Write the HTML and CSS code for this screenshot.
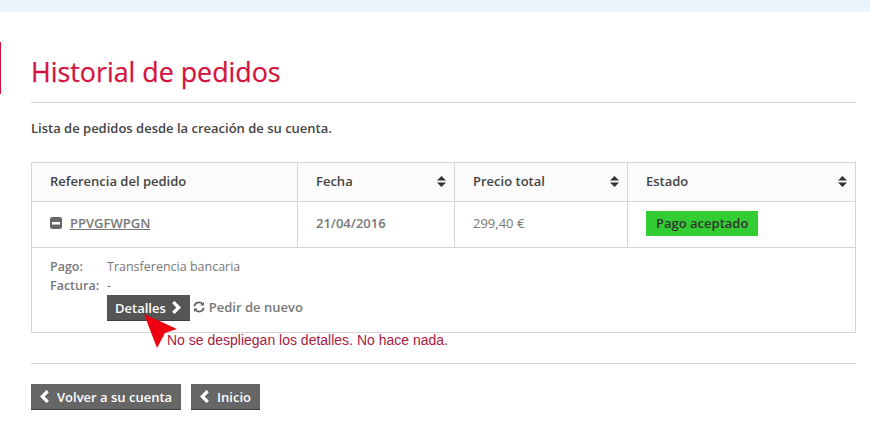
FILE: index.html
```html
<!DOCTYPE html>
<html lang="es">
<head>
<meta charset="utf-8">
<title>Historial de pedidos</title>
<link rel="stylesheet" href="styles.css">
</head>
<body>
<div class="topband"></div>
<main class="page">
  <div class="accent"></div>
  <h1 class="title">Historial de pedidos</h1>
  <p class="intro">Lista de pedidos desde la creación de su cuenta.</p>
  <table class="orders">
    <colgroup><col class="c1"><col class="c2"><col class="c3"><col class="c4"></colgroup>
    <thead>
      <tr>
        <th>Referencia del pedido</th>
        <th><span class="thin">Fecha<svg class="sort" viewBox="0 0 9 11"><path d="M4.5 0 9 4.5H0zM0 6.500h9L4.500 11z"/></svg></span></th>
        <th><span class="thin">Precio total<svg class="sort" viewBox="0 0 9 11"><path d="M4.5 0 9 4.5H0zM0 6.500h9L4.500 11z"/></svg></span></th>
        <th><span class="thin">Estado<svg class="sort" viewBox="0 0 9 11"><path d="M4.5 0 9 4.500H0zM0 6.500h9L4.500 11z"/></svg></span></th>
      </tr>
    </thead>
    <tbody>
      <tr class="main-row">
        <td><span class="ref"><svg class="minus" viewBox="0 0 12 12"><rect width="12" height="12" rx="2.500" fill="#666"/><rect x="2" y="5" width="8" height="2.500" fill="#fff"/></svg><a class="ref-link" href="#">PPVGFWPGN</a></span></td>
        <td class="date">21/04/2016</td>
        <td class="price">299,40 €</td>
        <td><span class="status">Pago aceptado</span></td>
      </tr>
      <tr class="detail-row">
        <td colspan="4">
          <div class="info"><span class="label">Pago:</span><span>Transferencia bancaria</span></div>
          <div class="info"><span class="label">Factura:</span><span>-</span></div>
          <div class="actions">
            <a class="btn btn-dark" href="#">Detalles<svg class="chev" viewBox="0 0 9 12"><path d="M2 1 7 6l-5 5" /></svg></a>
            <a class="reorder" href="#"><svg class="refresh" viewBox="0 0 12 12"><path d="M1.200 5.200A4.800 4.800 0 0 1 9.600 3.200M10.800 6.800A4.800 4.800 0 0 1 2.400 8.800"/><path class="fill" d="M11 .8V4.600H7.200zM1 11.200V7.400H4.800z"/></svg>Pedir de nuevo</a>
          </div>
          <svg class="arrow" viewBox="0 0 38 36"><path d="M2 1 35 16 23 20 15 35z"/></svg>
          <span class="note">No se despliegan los detalles. No hace nada.</span>
        </td>
      </tr>
    </tbody>
  </table>
  <hr class="rule">
  <div class="footer-btns">
    <a class="btn btn-grey" href="#"><svg class="chev" viewBox="0 0 9 12"><path d="M7 1 2 6l5 5"/></svg>Volver a su cuenta</a>
    <a class="btn btn-grey" href="#"><svg class="chev" viewBox="0 0 9 12"><path d="M7 1 2 6l5 5"/></svg>Inicio</a>
  </div>
</main>
</body>
</html>
```
FILE: styles.css
```css
* { box-sizing: border-box; }
html, body { margin: 0; padding: 0; background: #fff; }
body { font-family: "Open Sans", "Liberation Sans", sans-serif; font-size: 13px; color: #777; height: 426px; overflow: hidden; }
.topband { height: 12px; background: #eaf4fd; }
.page { position: relative; padding: 0 14px 0 31px; }
.accent { position: absolute; left: 0; top: 30px; width: 1px; height: 52px; background: #d3123f; }
.title { margin: 0; padding-top: 39px; height: 91px; border-bottom: 1px solid #d6d6d6; font-size: 26.800px; line-height: 41px; font-weight: 500; color: #d5133f; -webkit-text-stroke: .25px #d5133f; }
.intro { margin: 16px 0 0; font-size: 13px; line-height: 18px; font-weight: 600; color: #444; }
.orders { margin-top: 25px; width: 824px; table-layout: fixed; border-collapse: collapse; }
.c1 { width: 266px; } .c2 { width: 157px; } .c3 { width: 173px; } .c4 { width: 228px; }
.orders th, .orders td { border: 1px solid #d6d4d4; padding: 0 0 0 18px; text-align: left; }
.orders th { height: 39px; background: #fbfbfb; font-size: 13px; font-weight: 600; color: #444; padding-bottom: 2px; }
.thin { display: flex; align-items: center; justify-content: space-between; padding-right: 8px; }
.sort { width: 9px; height: 11px; fill: #333; }
.main-row td { height: 46px; font-size: 13px; padding-bottom: 3px; }
.ref { display: flex; align-items: center; gap: 8px; }
.minus { width: 12px; height: 12px; }
.ref-link { color: #777; font-weight: 600; text-decoration: underline; }
.date { font-weight: 600; }
.price { font-weight: 400; }
.status { display: inline-block; background: #32cd32; color: #333; padding: 0 10px; height: 25px; line-height: 25px; font-weight: 600; font-size: 13px; }
.orders .detail-row td { position: relative; height: 85px; padding-top: 10px; vertical-align: top; }
.info { display: flex; line-height: 18px; height: 18.500px; font-size: 12.500px; }
.label { width: 57px; font-weight: 600; }
.actions { display: flex; align-items: center; margin: 0 0 0 57px; height: 26px; }
.btn { display: inline-flex; align-items: center; height: 26px; color: #fff; font-weight: 600; font-size: 13px; text-decoration: none; border-bottom: 1px solid #3d3d3d; }
.btn-dark { background: #555; padding: 0 9px 0 8px; gap: 5px; }
.btn-grey { background: #666; padding: 0 9px; gap: 7px; }
.chev { width: 10px; height: 13px; fill: none; stroke: #fff; stroke-width: 3; }
.reorder { display: inline-flex; align-items: center; gap: 4px; margin-left: 3px; margin-top: -3px; color: #777; font-weight: 600; text-decoration: none; }
.refresh { width: 12px; height: 12px; fill: none; stroke: #666; stroke-width: 1.800; }
.refresh .fill { fill: #666; stroke: none; }
.arrow { position: absolute; left: 110px; top: 65px; width: 38px; height: 36px; fill: #ee0010; }
.note { position: absolute; left: 135px; top: 84px; font-family: "Liberation Sans", sans-serif; font-size: 14px; line-height: 16px; color: #a8203f; white-space: nowrap; }
.rule { margin: 30px 0 0; border: 0; border-top: 1px solid #d6d4d4; }
.footer-btns { display: flex; gap: 10px; margin-top: 20px; }
```
